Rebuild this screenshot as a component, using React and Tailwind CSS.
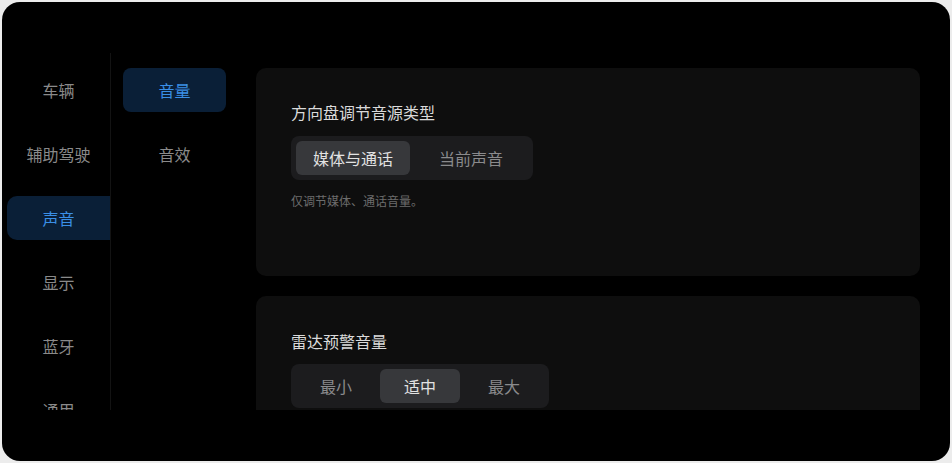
import React from "react";

const font = { fontFamily: '"Noto Sans CJK SC", "Noto Sans", sans-serif' };

function Segmented({ options, selected, w }) {
  return (
    <div className="inline-flex gap-[4px] rounded-[8px] bg-[#1c1c1e] p-[5px]">
      {options.map((o, i) => (
        <div
          key={o}
          className={
            "flex h-[34px] items-center justify-center rounded-[6px] text-[16px] " +
            (i === selected ? "bg-[#37383b] text-[#e2e2e2]" : "text-[#8a8a8c]")
          }
          style={{ width: w }}
        >
          {o}
        </div>
      ))}
    </div>
  );
}

export default function App() {
  const nav = ["车辆", "辅助驾驶", "声音", "显示", "蓝牙", "通用"];
  return (
    <div className="h-[463px] w-[952px] bg-[#ececec] p-[2px]" style={font}>
      <div className="h-[459px] w-[948px] overflow-hidden rounded-[18px] bg-black pt-[51px]">
        <div className="flex h-[357px] overflow-hidden">
          <div className="flex w-[108px] shrink-0 flex-col gap-[20px] pl-[5px] pt-[15px]">
            {nav.map((n, i) => (
              <div
                key={n}
                className={
                  "flex h-[44px] shrink-0 items-center justify-center rounded-l-[10px] text-[16px] " +
                  (i === 2 ? "bg-[#0a1f37] text-[#3a8fe6]" : "text-[#8a8a8a]")
                }
              >
                {n}
              </div>
            ))}
          </div>
          <div className="w-px shrink-0 bg-[#131313]" />
          <div className="ml-[12px] flex w-[103px] shrink-0 flex-col gap-[20px] pt-[15px]">
            <div className="flex h-[44px] items-center justify-center rounded-[8px] bg-[#0a1f37] text-[16px] text-[#3a8fe6]">
              音量
            </div>
            <div className="flex h-[44px] items-center justify-center text-[16px] text-[#8a8a8a]">
              音效
            </div>
          </div>
          <div className="ml-[30px] mr-[30px] flex flex-1 flex-col gap-[20px] pt-[15px]">
            <div className="h-[208px] shrink-0 rounded-[10px] bg-[#0e0e0e] px-[35px] pt-[34px]">
              <div className="text-[16px] leading-[20px] text-[#dadada]">方向盘调节音源类型</div>
              <div className="mt-[14px]">
                <Segmented options={["媒体与通话", "当前声音"]} selected={0} w="114px" />
              </div>
              <div className="mt-[13px] text-[12px] leading-[16px] text-[#6c6c6c]">仅调节媒体、通话音量。</div>
            </div>
            <div className="h-[160px] shrink-0 rounded-[10px] bg-[#0e0e0e] px-[35px] pt-[35px]">
              <div className="text-[16px] leading-[20px] text-[#dadada]">雷达预警音量</div>
              <div className="mt-[13px]">
                <Segmented options={["最小", "适中", "最大"]} selected={1} w="80px" />
              </div>
            </div>
          </div>
        </div>
      </div>
    </div>
  );
}
